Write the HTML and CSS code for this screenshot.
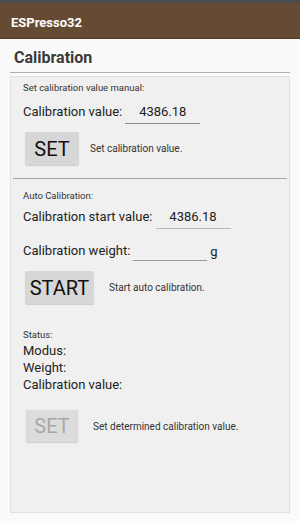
FILE: index.html
```html
<!DOCTYPE html>
<html lang="en">
<head>
    <meta charset="UTF-8">
    <meta name="viewport" content="width=device-width, initial-scale=1.0">
    <title>ESPresso32 - Calibration</title>
    <link rel="stylesheet" href="styles.css">
</head>
<body>
    <div class="statusbar"></div>
    <header class="appbar">
        <span class="appbar__title">ESPresso32</span>
    </header>

    <main class="page">
        <h1 class="page__title">Calibration</h1>

        <div class="panel">
            <section class="section">
                <div class="caption">Set calibration value manual:</div>
                <div class="field">
                    <span class="field__label">Calibration value:</span>
                    <input class="field__input" type="text" value="4386.18">
                </div>
                <div class="action">
                    <button class="btn">SET</button>
                    <span class="action__text">Set calibration value.</span>
                </div>
            </section>

            <hr class="divider">

            <section class="section">
                <div class="caption caption--auto">Auto Calibration:</div>
                <div class="field field--start">
                    <span class="field__label">Calibration start value:</span>
                    <input class="field__input" type="text" value="4386.18">
                </div>
                <div class="field field--weight">
                    <span class="field__label">Calibration weight:</span>
                    <input class="field__input field__input--weight" type="text" value="">
                    <span class="field__unit">g</span>
                </div>
                <div class="action action--start">
                    <button class="btn btn--wide">START</button>
                    <span class="action__text">Start auto calibration.</span>
                </div>

                <div class="caption caption--status">Status:</div>
                <div class="status">
                    <div>Modus:</div>
                    <div>Weight:</div>
                    <div>Calibration value:</div>
                </div>
                <div class="action action--final">
                    <button class="btn" disabled>SET</button>
                    <span class="action__text">Set determined calibration value.</span>
                </div>
            </section>
        </div>
    </main>
</body>
</html>
```

FILE: styles.css
```css
*{
    margin: 0;
    padding: 0;
    box-sizing: border-box;
}
html{
    background: #fafafa;
}
body{
    font-family: Roboto, "Liberation Sans", sans-serif;
    color: #222;
    background: #fafafa;
}

.statusbar {
    height: 3px;
    background: #4b4b4b;
}

.appbar {
    height: 36px;
    background: #654b34;
    border-bottom: 1px solid #4c3826;
    display: flex;
    align-items: center;
    padding: 4px 0 0 11px;
}

.appbar__title {
    color: #fff;
    font-size: 13px;
    font-weight: bold;
}

.page {
    padding: 0 10px;
}

.page__title {
    font-size: 16px;
    line-height: 20px;
    font-weight: bold;
    color: #3a3a3a;
    padding: 9px 0 4px 4px;
    border-bottom: 1px solid #b4acac;
}

.panel {
    margin-top: 3px;
    height: 437px;
    background: #f0f0f0;
    border: 1px solid #e2e2e2;
    padding: 0 2px;
}

.section {
    padding-left: 10px;
}

.caption {
    font-size: 9.5px;
    line-height: 10px;
    color: #333;
    padding-top: 6px;
}

.caption--auto {
    padding-top: 12px;
}

.caption--status {
    padding-top: 26px;
}

.field {
    display: flex;
    align-items: flex-end;
    height: 24px;
    margin-top: 7px;
}

.field--start {
    margin-top: 4px;
}

.field--weight {
    margin-top: 10px;
}

.field__label {
    font-size: 13px;
    line-height: 24px;
}

.field__input {
    width: 75px;
    height: 24px;
    margin-left: 3px;
    border: none;
    border-bottom: 1px solid #8a8a8a;
    background: transparent;
    font-family: inherit;
    font-size: 13px;
    color: #222;
    text-align: center;
    outline: none;
}

.field--start .field__input {
    border-bottom-color: #b8b8b8;
}

.field__input--weight {
    width: 74px;
    height: 22px;
    margin-bottom: 2px;
    border-bottom-color: #9a9a9a;
}

.field__unit {
    font-size: 13px;
    line-height: 14px;
    margin-left: 3px;
    margin-bottom: 4px;
}

.action {
    display: flex;
    align-items: center;
    margin-top: 8px;
    padding-left: 2px;
    gap: 11px;
}

.action--start {
    gap: 15px;
}

.action--final {
    margin-top: 17px;
    gap: 15px;
    padding-left: 3px;
}

.action__text {
    font-size: 10px;
    color: #333;
}

.btn {
    width: 54px;
    height: 33px;
    border: none;
    border-radius: 2px;
    background: #d6d7d6;
    box-shadow: 0 1px 1px rgba(0, 0, 0, 0.15);
    font-family: inherit;
    font-size: 20px;
    color: #111;
}

.btn--wide {
    width: 69px;
}

.btn:disabled {
    width: 52px;
    height: 32px;
    background: #dcdcdc;
    color: #a8a8a8;
}

.status {
    font-size: 13px;
    line-height: 17px;
    margin-top: 2px;
}

.divider {
    border: none;
    border-top: 1px solid #a8a8a8;
    margin-top: 13px;
}
```
